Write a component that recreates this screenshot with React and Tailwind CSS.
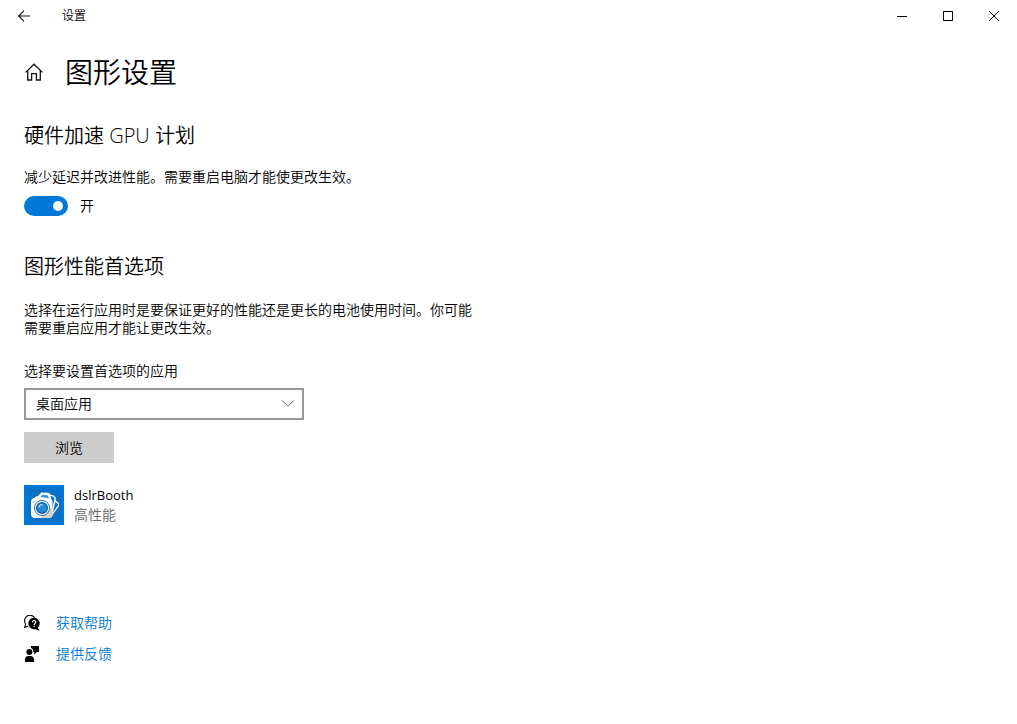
import { useState } from 'react';

function BackIcon() {
  return (
    <svg width="12" height="12" viewBox="0 0 12 12" fill="none" stroke="#111" strokeWidth="1.1" aria-hidden="true">
      <path d="M12 6H.8M6 .6L.6 6L6 11.4" />
    </svg>
  );
}

function HomeIcon() {
  return (
    <svg width="18" height="18" viewBox="0 0 18 18" fill="none" stroke="#111" strokeWidth="1.3" aria-hidden="true">
      <path d="M.6 9.4L9 1.2L17.4 9.4" />
      <path d="M2.7 7.6V17H6.6V10.7H11.4V17H15.3V7.6" />
    </svg>
  );
}

function HelpIcon() {
  return (
    <svg width="16" height="16" viewBox="0 0 16 16" aria-hidden="true">
      <path d="M4.2 11.2L.7 12.4L1.6 9A5.2 5.2 0 1 1 10.6 2.6" fill="none" stroke="#000" strokeWidth="1.1" />
      <path d="M10.1 2.8a5.7 5.7 0 1 1-.1 0zM13.6 12.4l2.2 3.2l-5-1.4z" fill="#000" />
      <path d="M8.5 7.2a1.6 1.6 0 1 1 2.5 1.3c-.6.4-.9.7-.9 1.4" fill="none" stroke="#fff" strokeWidth="1.2" />
      <rect x="9.5" y="10.8" width="1.2" height="1.2" fill="#fff" />
    </svg>
  );
}

function FeedbackIcon() {
  return (
    <svg width="16" height="16" viewBox="0 0 16 16" aria-hidden="true">
      <circle cx="5.4" cy="6" r="3" />
      <path d="M1 16v-2.2C1 11.6 2.2 10 4.2 10h2.2c2 0 3.6 1.6 3.6 3.8V16z" />
      <path d="M7 0h8v6h-2.2l-2.6 2.6V6H9.4C9.4 4 8.6 2.6 7 2z" />
    </svg>
  );
}

function CameraLogo() {
  return (
    <svg width="40" height="40" viewBox="0 0 40 40" className="shrink-0 bg-[#0078d7]" aria-hidden="true">
      <rect x="4" y="4" width="33" height="33" rx="5" fill="#0a70c4" />
      <path d="M27 13L33.4 17.6Q35.4 19.2 34 21.4L27 31z" fill="#0a70c4" stroke="#fff" strokeWidth="1.3" />
      <path d="M22 9.2L28.6 10.8Q31.8 11.8 31 15L27.4 30z" fill="#0a70c4" stroke="#fff" strokeWidth="1.4" />
      <path d="M13 12L17.4 7.6L23.6 7.8Q26.4 8.2 26.6 11L27.4 16V20H13z" fill="#fff" />
      <path d="M16.4 12L18.8 9.6L24 10.4L25 13.2z" fill="#3c92d6" />
      <rect x="7" y="13" width="21.5" height="20" rx="4" fill="#fff" />
      <path d="M10 13.6L11.4 11.4H16L17.6 13.6z" fill="#fff" />
      <path d="M23.6 26.5L28.5 22V29Q28.5 33 24.5 33H17z" fill="#d8d2cc" />
      <circle cx="18" cy="23" r="7.6" fill="#fff" stroke="#1261a6" strokeWidth=".9" />
      <circle cx="18" cy="23" r="5.4" fill="#2488d4" stroke="#0a5da8" strokeWidth="1.3" />
      <path d="M14.8 22.4A3.4 3.4 0 0 1 18.6 19.6" fill="none" stroke="#a9dcff" strokeWidth="1.3" />
      <circle cx="10" cy="17" r=".8" fill="#7aa6cc" />
    </svg>
  );
}

function TitleBar() {
  return (
    <header className="flex h-8 items-center">
      <button type="button" aria-label="返回" className="flex h-8 w-12 items-center justify-center">
        <BackIcon />
      </button>
      <span className="ml-3.5 text-xs leading-[18px]">设置</span>
      <div className="ml-auto flex">
        <button type="button" aria-label="最小化" className="flex h-8 w-[46px] items-center justify-center">
          <svg width="10" height="10" viewBox="0 0 10 10" aria-hidden="true">
            <path d="M0 5h10v1H0z" />
          </svg>
        </button>
        <button type="button" aria-label="最大化" className="flex h-8 w-[46px] items-center justify-center">
          <svg width="10" height="10" viewBox="0 0 10 10" fill="none" stroke="#000" aria-hidden="true">
            <rect x=".5" y=".5" width="9" height="9" />
          </svg>
        </button>
        <button type="button" aria-label="关闭" className="flex h-8 w-[46px] items-center justify-center">
          <svg width="10" height="10" viewBox="0 0 10 10" stroke="#000" aria-hidden="true">
            <path d="M0 0L10 10M10 0L0 10" />
          </svg>
        </button>
      </div>
    </header>
  );
}

export default function App() {
  const [gpuOn, setGpuOn] = useState(true);
  const [appType, setAppType] = useState('desktop');

  return (
    <div className="min-h-screen bg-white font-['Open_Sans','Noto_Sans_CJK_SC',sans-serif] text-sm leading-[18px] font-[350] text-black" lang="zh-CN">
      <TitleBar />
      <main className="px-6 pt-5">
        <div className="flex items-center gap-[22px]">
          <button type="button" aria-label="主页" className="ml-px">
            <HomeIcon />
          </button>
          <h1 className="text-[28px] leading-10 font-[350]">图形设置</h1>
        </div>

        <section className="mt-[30px]">
          <h2 className="text-xl leading-7 font-[350]">硬件加速 GPU 计划</h2>
          <p className="mt-[18px]">减少延迟并改进性能。需要重启电脑才能使更改生效。</p>
          <label className="mt-2.5 flex w-fit items-center gap-3">
            <input
              type="checkbox"
              role="switch"
              checked={gpuOn}
              onChange={e => setGpuOn(e.target.checked)}
              className="flex h-5 w-11 appearance-none items-center rounded-full bg-[#999] px-[5px] before:size-2.5 before:rounded-full before:bg-white checked:justify-end checked:bg-[#0078d7]"
            />
            <span>{gpuOn ? '开' : '关'}</span>
          </label>
        </section>

        <section className="mt-[37px]">
          <h2 className="text-xl leading-7 font-[350]">图形性能首选项</h2>
          <p className="mt-5 max-w-[450px]">选择在运行应用时是要保证更好的性能还是更长的电池使用时间。你可能需要重启应用才能让更改生效。</p>

          <label htmlFor="app-type" className="mt-[25px] block w-fit">选择要设置首选项的应用</label>
          <div className="relative mt-2 max-w-[280px]">
            <select
              id="app-type"
              value={appType}
              onChange={e => setAppType(e.target.value)}
              className="h-8 w-full appearance-none border-2 border-[#999] bg-white px-2.5"
            >
              <option value="desktop">桌面应用</option>
              <option value="store">Microsoft Store 应用</option>
            </select>
            <svg width="12" height="7" viewBox="0 0 12 7" fill="none" stroke="#666" className="pointer-events-none absolute top-3 right-2.5" aria-hidden="true">
              <path d="M.3 .6L6 6.2L11.7 .6" />
            </svg>
          </div>
          <button type="button" className="mt-3 flex h-[31px] w-[90px] items-center justify-center bg-[#ccc]">浏览</button>

          <button type="button" className="mt-[22px] flex items-center gap-2.5 text-left">
            <CameraLogo />
            <span className="flex flex-col gap-0.5">
              <span className="text-[13px] font-normal">dslrBooth</span>
              <span className="text-[#666]">高性能</span>
            </span>
          </button>
        </section>

        <nav className="mt-[89px] flex flex-col items-start gap-[13px]">
          <a href="#help" className="flex items-center gap-4">
            <HelpIcon />
            <span className="text-[#0078d7]">获取帮助</span>
          </a>
          <a href="#feedback" className="flex items-center gap-4">
            <FeedbackIcon />
            <span className="text-[#0078d7]">提供反馈</span>
          </a>
        </nav>
      </main>
    </div>
  );
}
